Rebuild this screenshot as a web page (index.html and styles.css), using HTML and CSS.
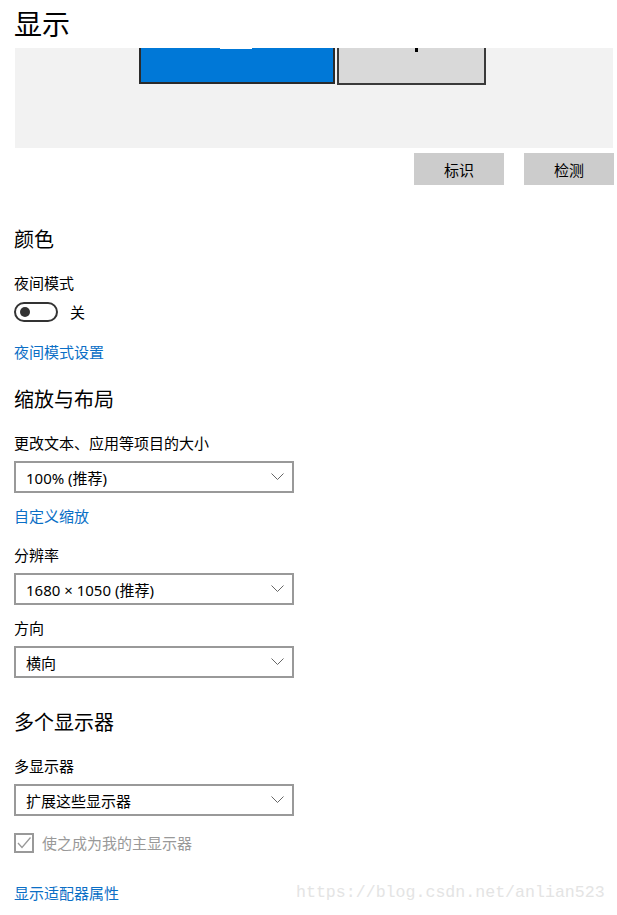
FILE: index.html
```html
<!DOCTYPE html>
<html lang="zh-CN">
<head>
    <meta charset="UTF-8">
    <title>显示</title>
    <link rel="stylesheet" href="styles.css">
</head>
<body>
<div class="page">
    <h1 class="title">显示</h1>

    <!-- monitor arrangement preview -->
    <div class="preview">
        <div class="monitor primary"><span class="num-tag"></span></div>
        <div class="monitor second"><span class="num-dot"></span></div>
    </div>
    <div class="preview-actions">
        <button class="gray-btn">标识</button>
        <button class="gray-btn">检测</button>
    </div>

    <h2 class="section">颜色</h2>
    <div class="label first">夜间模式</div>
    <div class="toggle-row">
        <span class="toggle"><span class="knob"></span></span>
        <span class="toggle-text">关</span>
    </div>
    <a class="link after-toggle" href="#">夜间模式设置</a>

    <h2 class="section after-link">缩放与布局</h2>
    <div class="label first">更改文本、应用等项目的大小</div>
    <div class="select">
        <span>100% (推荐)</span>
        <svg class="chev" width="13" height="8" viewBox="0 0 13 8"><path d="M0.5 0.5 L6.5 6.5 L12.5 0.5" fill="none" stroke="#666" stroke-width="1"/></svg>
    </div>
    <a class="link after-select" href="#">自定义缩放</a>
    <div class="label after-link2">分辨率</div>
    <div class="select">
        <span>1680 × 1050 (推荐)</span>
        <svg class="chev" width="13" height="8" viewBox="0 0 13 8"><path d="M0.5 0.5 L6.5 6.5 L12.5 0.5" fill="none" stroke="#666" stroke-width="1"/></svg>
    </div>
    <div class="label after-select">方向</div>
    <div class="select">
        <span>横向</span>
        <svg class="chev" width="13" height="8" viewBox="0 0 13 8"><path d="M0.5 0.5 L6.5 6.5 L12.5 0.5" fill="none" stroke="#666" stroke-width="1"/></svg>
    </div>

    <h2 class="section after-select2">多个显示器</h2>
    <div class="label first">多显示器</div>
    <div class="select">
        <span>扩展这些显示器</span>
        <svg class="chev" width="13" height="8" viewBox="0 0 13 8"><path d="M0.5 0.5 L6.5 6.5 L12.5 0.5" fill="none" stroke="#666" stroke-width="1"/></svg>
    </div>
    <div class="check-row">
        <span class="checkbox">
            <svg width="16" height="16" viewBox="0 0 16 16"><path d="M2 8 L6 12.5 L14.5 2.5" fill="none" stroke="#999" stroke-width="1.3"/></svg>
        </span>
        <span class="check-text">使之成为我的主显示器</span>
    </div>
    <a class="link after-check" href="#">显示适配器属性</a>
</div>
<div class="watermark">https://blog.csdn.net/anlian523</div>
</body>
</html>
```

FILE: styles.css
```css
body { margin: 0; background: #fff; color: #000; font-family: "Noto Sans", "Noto Sans CJK SC", sans-serif; font-size: 15px; }
.page { padding-left: 14px; width: 600px; display: flex; flex-direction: column; align-items: flex-start; }

.title { margin: 0; font-size: 28px; font-weight: normal; line-height: 48px; height: 48px; }

.preview { position: relative; margin-left: 1px; width: 598px; height: 100px; background: #f2f2f2; overflow: hidden; }
.monitor { position: absolute; top: -40px; box-sizing: border-box; border: 2px solid #333; }
.monitor.primary { left: 124px; width: 196px; height: 76px; background: #0078d7; border-color: #2b2b2b; }
.monitor.second { left: 322px; width: 149px; height: 77px; background: #d9d9d9; border-color: #3a3a3a; }
.num-tag { position: absolute; left: 79px; top: 29px; width: 32px; height: 10px; background: #fff; }
.num-dot { position: absolute; left: 76px; top: 38px; width: 3px; height: 4px; background: #000; }

.preview-actions { align-self: stretch; display: flex; justify-content: flex-end; gap: 20px; margin-top: 5px; }
.gray-btn { width: 90px; height: 32px; border: none; background: #cccccc; color: #000; font-family: inherit; font-size: 15px; padding: 0; }

.section { margin: 41px 0 0; font-size: 20px; font-weight: normal; line-height: 28px; height: 28px; }
.section.after-link { margin-top: 24px; }
.section.after-select2 { margin-top: 31px; }

.label { line-height: 20px; height: 20px; }
.label.first { margin-top: 19px; }
.label.after-link2 { margin-top: 19px; }
.label.after-select { margin-top: 13px; }

.toggle-row { display: flex; align-items: center; margin-top: 9px; height: 20px; }
.toggle { box-sizing: border-box; width: 44px; height: 20px; border: 2px solid #333; border-radius: 10px; display: flex; align-items: center; padding-left: 4px; }
.knob { width: 10px; height: 10px; border-radius: 50%; background: #333; }
.toggle-text { margin-left: 12px; line-height: 20px; }

.link { display: block; color: #0b6fc6; text-decoration: none; line-height: 20px; height: 20px; }
.link.after-toggle { margin-top: 20px; }
.link.after-select { margin-top: 13px; }
.link.after-check { margin-top: 30px; }

.select { box-sizing: border-box; width: 280px; height: 32px; border: 2px solid #999; display: flex; align-items: center; justify-content: space-between; padding: 0 8px 0 10px; }
.label + .select { margin-top: 8px; }
.chev { display: block; }

.check-row { display: flex; align-items: center; margin-top: 17px; height: 20px; }
.checkbox { box-sizing: border-box; width: 20px; height: 20px; border: 2px solid #999; display: flex; align-items: center; justify-content: center; }
.checkbox svg { display: block; }
.check-text { margin-left: 8px; color: #999; line-height: 20px; }

.watermark { position: absolute; left: 296px; top: 882px; font-family: "Liberation Mono", monospace; font-size: 16.6px; line-height: 22px; color: #e4e4e4; }
```
